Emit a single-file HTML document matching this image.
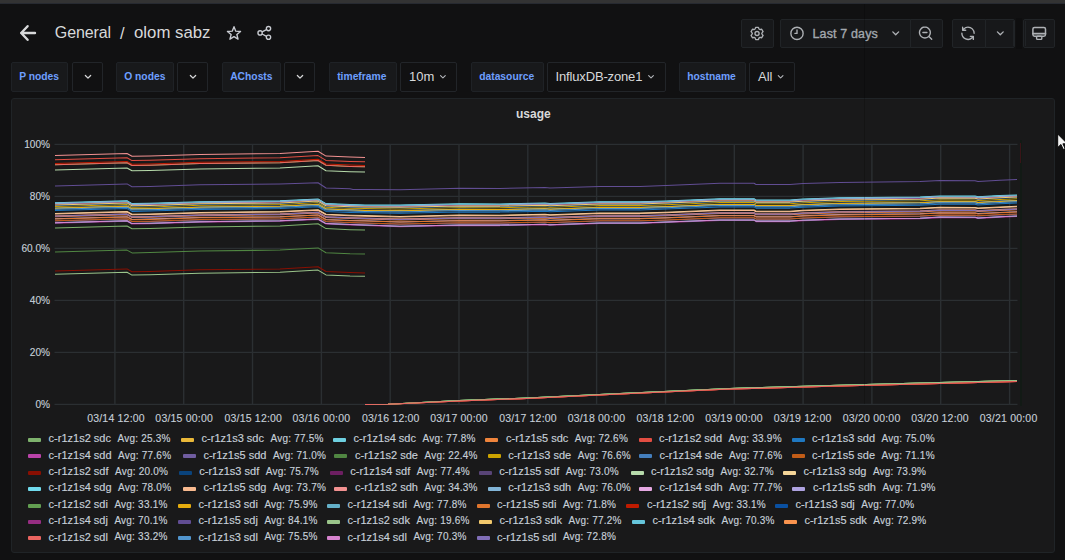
<!DOCTYPE html>
<html><head><meta charset="utf-8">
<style>
*{box-sizing:border-box;margin:0;padding:0}
html,body{width:1065px;height:560px;overflow:hidden;background:#111112;font-family:"Liberation Sans",sans-serif;color:#c7d0d9}
.abs{position:absolute}
#topbar{position:absolute;left:0;top:0;width:1065px;height:3px;background:#333333}
#topbar2{position:absolute;left:0;top:3px;width:1065px;height:1px;background:#272a31}
.title{position:absolute;top:23.3px;font-size:16.5px;color:#d8d9da;white-space:nowrap;line-height:20px}
.btn{position:absolute;top:19px;height:29px;background:#17181a;border:1px solid #212427;border-radius:2px}
.lbl{position:absolute;top:62px;height:30px;background:#18191b;border:1px solid #1f2226;border-radius:2px;color:#6e9fff;font-weight:bold;font-size:10.3px;line-height:27px;white-space:nowrap}
.dd{position:absolute;top:62px;height:30px;background:#111112;border:1px solid #222529;border-radius:2px;color:#d8d9da;font-size:13px;line-height:28px;white-space:nowrap}
#panel{position:absolute;left:11px;top:98px;width:1044px;height:455px;background:#19191a;border:1px solid #202427;border-radius:3px}
.yl{position:absolute;right:1015px;font-size:10.1px;-webkit-text-stroke:0.12px #c7d0d9;color:#c7d0d9;line-height:14px;white-space:nowrap;text-align:right}
.xl{position:absolute;top:410.9px;width:80px;text-align:center;font-size:10.5px;letter-spacing:0.2px;-webkit-text-stroke:0.12px #c7d0d9;color:#c7d0d9;line-height:14px;white-space:nowrap}
.li{position:absolute;height:16px;white-space:nowrap;font-size:11px;line-height:16px;color:#c7d0d9;-webkit-text-stroke:0.15px #c7d0d9}
.li i{display:inline-block;width:13px;height:4px;border-radius:1px;vertical-align:middle;margin-right:7.6px;position:relative;top:-1px}
.ln{display:inline-block;position:relative;top:-1.7px}
.la{display:inline-block;margin-left:6.5px;font-size:10px;letter-spacing:0.22px;position:relative;top:-1.8px}
svg{position:absolute;left:0;top:0}
</style></head><body>
<div id="topbar"></div><div id="topbar2"></div>

<!-- header -->
<svg width="1065" height="60" style="overflow:visible">
  <g fill="none" stroke="#d8d9da" stroke-width="2.4" stroke-linecap="round" stroke-linejoin="round">
    <path d="M21.2 33 L35 33 M21.2 33 L27.6 26.2 M21.2 33 L27.6 39.8"/>
  </g>
  <g fill="none" stroke="#c9ccd2" stroke-width="1.35" stroke-linejoin="round">
    <path d="M234.00 26.70 L235.76 31.17 L240.56 31.47 L236.85 34.53 L238.06 39.18 L234.00 36.60 L229.94 39.18 L231.15 34.53 L227.44 31.47 L232.24 31.17 Z"/>
  </g>
  <g fill="none" stroke="#c9ccd2" stroke-width="1.35">
    <circle cx="260.1" cy="32.9" r="2.15"/><circle cx="268.5" cy="28.6" r="2.15"/><circle cx="268.5" cy="37.3" r="2.15"/>
    <path d="M262.1 31.9 L266.5 29.6 M262.1 34 L266.5 36.3"/>
  </g>
</svg>
<div class="title" style="left:54.8px;font-size:16px;letter-spacing:-0.1px">General</div><div class="title" style="left:120px">/</div><div class="title" style="left:134px;font-size:16.8px">olom sabz</div>

<div class="btn" style="left:741px;width:33px"></div>
<div class="btn" style="left:780px;width:131px;border-radius:2px 0 0 2px"></div>
<div class="btn" style="left:910px;width:33px;border-radius:0 2px 2px 0"></div>
<div class="btn" style="left:952px;width:34px;border-radius:2px 0 0 2px"></div>
<div class="btn" style="left:985px;width:30px;border-radius:0 2px 2px 0"></div>
<div class="btn" style="left:1023px;width:32px"></div>
<div class="abs" style="left:1015.5px;top:18px;width:6px;height:31px;background:#0e0e0f"></div>
<div class="abs" style="left:1013px;top:21px;width:1px;height:25px;background:#202326"></div>
<div class="abs" style="left:1024.5px;top:21px;width:1px;height:25px;background:#202326"></div>
<div class="abs" style="left:812.5px;top:25.6px;font-size:12.5px;letter-spacing:0.14px;-webkit-text-stroke:0.35px #a3a8ae;color:#a3a8ae;line-height:16px;white-space:nowrap">Last 7 days</div>
<svg width="1065" height="60">
  <g fill="none" stroke="#aeb1b5" stroke-width="1.25" stroke-linecap="round" stroke-linejoin="round">
    <!-- gear -->
  </g><g fill="#aeb1b5" stroke="none">
    <path transform="translate(749.14 25.34) scale(0.680)" d="M19.9,12.66a1,1,0,0,1,0-1.32L21.18,9.9a1,1,0,0,0,.12-1.17l-2-3.46a1,1,0,0,0-1.07-.48l-1.88.38a1,1,0,0,1-1.15-.66l-.61-1.83A1,1,0,0,0,13.64,2h-4a1,1,0,0,0-1,.68L8.08,4.51a1,1,0,0,1-1.150.66L5,4.79A1,1,0,0,0,4,5.27L2,8.73A1,1,0,0,0,2.1,9.9l1.27,1.44a1,1,0,0,1,0,1.32L2.1,14.1A1,1,0,0,0,2,15.27l2,3.46a1,1,0,0,0,1.07.48l1.88-.38a1,1,0,0,1,1.15.66l.61,1.830a1,1,0,0,0,1,.68h4a1,1,0,0,0,.95-.68l.61-1.83a1,1,0,0,1,1.15-.66l1.88.38a1,1,0,0,0,1.07-.48l2-3.46a1,1,0,0,0-.12-1.17ZM18.41,14l.8.9-1.28,2.22-1.18-.24a3,3,0,0,0-3.45,2L12.92,20H10.36L10,18.86a3,3,0,0,0-3.45-2l-1.18.24L4.07,14.89l.8-.9a3,3,0,0,0,0-4l-.8-.9L5.35,6.89l1.18.24a3,3,0,0,0,3.45-2L10.36,4h2.560l.38,1.14a3,3,0,0,0,3.45,2l1.18-.24,1.28,2.22-.8.9A3,3,0,0,0,18.41,14ZM11.64,8a4,4,0,1,0,4,4A4,4,0,0,0,11.64,8Zm0,6a2,2,0,1,1,2-2A2,2,0,0,1,11.64,14Z"/>
    <path transform="translate(788.84 25.24) scale(0.680)" d="M12,2A10,10,0,1,0,22,12,10.01114,10.01114,0,0,0,12,2Zm0,18a8,8,0,1,1,8-8A8.00917,8.00917,0,0,1,12,20Zm0-14a1,1,0,0,0-1,1v4H9a1,1,0,0,0,0,2h3a1,1,0,0,0,1-1V7A1,1,0,0,0,12,6Z"/>
  </g><g fill="none" stroke="#aeb1b5" stroke-width="1.25" stroke-linecap="round" stroke-linejoin="round">
    <!-- chevron -->
    
    <!-- zoom out -->
  </g><g fill="#aeb1b5" stroke="none">
    <path transform="translate(917.44 25.04) scale(0.680)" d="M14,10H8a1,1,0,0,0,0,2h6a1,1,0,0,0,0-2Zm7.71,10.29L18,16.61A9,9,0,1,0,16.61,18l3.68,3.68a1,1,0,0,0,1.42,0A1,1,0,0,0,21.71,20.29ZM11,18a7,7,0,1,1,7-7A7,7,0,0,1,11,18Z"/>
    <path transform="translate(959.84 25.14) scale(0.680)" d="M19.91,15.51H15.38a1,1,0,0,0,0,2h2.4A8,8,0,0,1,4,12a1,1,0,0,0-2,0,10,10,0,0,0,16.88,7.23V21a1,1,0,0,0,2,0V16.5A1,1,0,0,0,19.910,15.51ZM12,2A10,10,0,0,0,5.12,4.77V3a1,1,0,0,0-2,0V7.5a1,1,0,0,0,1,1h4.5a1,1,0,0,0,0-2H6.22A8,8,0,0,1,20,12a1,1,0,0,0,2,0A10,10,0,0,0,12,2Z"/>
  </g><g fill="none" stroke="#aeb1b5" stroke-width="1.25" stroke-linecap="round" stroke-linejoin="round">
    <!-- chevron -->
    
  </g><g fill="#aeb1b5" stroke="none">
    <path transform="translate(887.54 25.14) scale(0.680)" d="M17,9.17a1,1,0,0,0-1.41,0L12,12.71,8.46,9.17a1,1,0,0,0-1.41,0,1,1,0,0,0,0,1.42l4.24,4.24a1,1,0,0,0,1.42,0L17,10.59A1,1,0,0,0,17,9.17Z"/>
    <path transform="translate(992.14 25.14) scale(0.680)" d="M17,9.17a1,1,0,0,0-1.41,0L12,12.71,8.46,9.17a1,1,0,0,0-1.41,0,1,1,0,0,0,0,1.42l4.24,4.24a1,1,0,0,0,1.42,0L17,10.59A1,1,0,0,0,17,9.17Z"/>
  </g><g fill="none" stroke="#aeb1b5" stroke-width="1.25" stroke-linecap="round" stroke-linejoin="round">
    <!-- tv -->
    <rect x="1032.9" y="27.4" width="12.6" height="8.8" rx="1.6" stroke-width="1.5"/>
    <path d="M1033 33.6 H1045.4" stroke-width="1.7"/>
    <rect x="1036.6" y="36.2" width="5.2" height="3.2" rx="0.8" stroke-width="1.4"/>
  </g>
</svg>

<!-- variables -->
<div class="lbl" style="left:11px;width:57px;padding-left:7.2px">P nodes</div>
<div class="dd" style="left:72px;width:31px"></div>
<div class="lbl" style="left:116px;width:58px;padding-left:7.2px">O nodes</div>
<div class="dd" style="left:177px;width:31px"></div>
<div class="lbl" style="left:222px;width:59px;padding-left:7.2px">AChosts</div>
<div class="dd" style="left:284px;width:31px"></div>
<div class="lbl" style="left:329px;width:68px;padding-left:7.2px">timeframe</div>
<div class="dd" style="left:400px;width:57px;padding-left:8px">10m</div>
<div class="lbl" style="left:471px;width:73px;padding-left:7.2px">datasource</div>
<div class="dd" style="left:547px;width:119px;padding-left:7.5px;letter-spacing:-0.15px">InfluxDB-zone1</div>
<div class="lbl" style="left:679px;width:67px;padding-left:7.2px">hostname</div>
<div class="dd" style="left:749px;width:46px;padding-left:8px">All</div>
<svg width="1065" height="100">
  <g fill="#d8d9da">
    <path transform="translate(80.56 69.36) scale(0.620)" d="M17,9.17a1,1,0,0,0-1.41,0L12,12.71,8.46,9.17a1,1,0,0,0-1.41,0,1,1,0,0,0,0,1.42l4.24,4.24a1,1,0,0,0,1.42,0L17,10.59A1,1,0,0,0,17,9.17Z"/>
    <path transform="translate(185.56 69.36) scale(0.620)" d="M17,9.17a1,1,0,0,0-1.41,0L12,12.71,8.46,9.17a1,1,0,0,0-1.41,0,1,1,0,0,0,0,1.42l4.24,4.24a1,1,0,0,0,1.42,0L17,10.59A1,1,0,0,0,17,9.17Z"/>
    <path transform="translate(292.56 69.36) scale(0.620)" d="M17,9.17a1,1,0,0,0-1.41,0L12,12.71,8.46,9.17a1,1,0,0,0-1.41,0,1,1,0,0,0,0,1.42l4.24,4.24a1,1,0,0,0,1.42,0L17,10.59A1,1,0,0,0,17,9.17Z"/>
  </g>
  <g fill="#b9bcc0">
    <path transform="translate(436.30 70.20) scale(0.550)" d="M17,9.17a1,1,0,0,0-1.41,0L12,12.71,8.46,9.17a1,1,0,0,0-1.41,0,1,1,0,0,0,0,1.42l4.24,4.24a1,1,0,0,0,1.42,0L17,10.59A1,1,0,0,0,17,9.17Z"/>
    <path transform="translate(644.40 70.20) scale(0.550)" d="M17,9.17a1,1,0,0,0-1.41,0L12,12.71,8.46,9.17a1,1,0,0,0-1.41,0,1,1,0,0,0,0,1.42l4.24,4.24a1,1,0,0,0,1.42,0L17,10.59A1,1,0,0,0,17,9.17Z"/>
    <path transform="translate(774.00 70.20) scale(0.550)" d="M17,9.17a1,1,0,0,0-1.41,0L12,12.71,8.46,9.17a1,1,0,0,0-1.41,0,1,1,0,0,0,0,1.42l4.24,4.24a1,1,0,0,0,1.42,0L17,10.59A1,1,0,0,0,17,9.17Z"/>
  </g>
</svg>

<!-- panel -->
<div id="panel"></div>
<div class="abs" style="left:0.8px;width:1065px;top:106px;text-align:center;font-size:12px;font-weight:bold;color:#d8d9da;line-height:16px">usage</div>
<div class="yl" style="top:137.5px">100%</div>
<div class="yl" style="top:189.5px">80%</div>
<div class="yl" style="top:241.5px">60.0%</div>
<div class="yl" style="top:293.5px">40%</div>
<div class="yl" style="top:345.5px">20%</div>
<div class="yl" style="top:397.5px">0%</div>
<div class="xl" style="left:76.0px">03/14 12:00</div>
<div class="xl" style="left:144.2px">03/15 00:00</div>
<div class="xl" style="left:213.3px">03/15 12:00</div>
<div class="xl" style="left:281.4px">03/16 00:00</div>
<div class="xl" style="left:350.8px">03/16 12:00</div>
<div class="xl" style="left:419.0px">03/17 00:00</div>
<div class="xl" style="left:488.0px">03/17 12:00</div>
<div class="xl" style="left:556.5px">03/18 00:00</div>
<div class="xl" style="left:625.4px">03/18 12:00</div>
<div class="xl" style="left:694.0px">03/19 00:00</div>
<div class="xl" style="left:762.7px">03/19 12:00</div>
<div class="xl" style="left:831.6px">03/20 00:00</div>
<div class="xl" style="left:900.0px">03/20 12:00</div>
<div class="xl" style="left:968.6px">03/21 00:00</div>
<svg width="1065" height="560">
  <g stroke="#2b2f32" stroke-width="1.4" fill="none">
<line x1="54.5" x2="1017.5" y1="404.4" y2="404.4"/>
<line x1="54.5" x2="1017.5" y1="352.4" y2="352.4"/>
<line x1="54.5" x2="1017.5" y1="300.4" y2="300.4"/>
<line x1="54.5" x2="1017.5" y1="248.4" y2="248.4"/>
<line x1="54.5" x2="1017.5" y1="196.4" y2="196.4"/>
<line x1="54.5" x2="1017.5" y1="144.4" y2="144.4"/>
<line x1="114.9" x2="114.9" y1="144.4" y2="404.4"/>
<line x1="183.7" x2="183.7" y1="144.4" y2="404.4"/>
<line x1="252.5" x2="252.5" y1="144.4" y2="404.4"/>
<line x1="321.4" x2="321.4" y1="144.4" y2="404.4"/>
<line x1="390.2" x2="390.2" y1="144.4" y2="404.4"/>
<line x1="459.0" x2="459.0" y1="144.4" y2="404.4"/>
<line x1="527.8" x2="527.8" y1="144.4" y2="404.4"/>
<line x1="596.6" x2="596.6" y1="144.4" y2="404.4"/>
<line x1="665.5" x2="665.5" y1="144.4" y2="404.4"/>
<line x1="734.3" x2="734.3" y1="144.4" y2="404.4"/>
<line x1="803.1" x2="803.1" y1="144.4" y2="404.4"/>
<line x1="871.9" x2="871.9" y1="144.4" y2="404.4"/>
<line x1="940.7" x2="940.7" y1="144.4" y2="404.4"/>
<line x1="1009.6" x2="1009.6" y1="144.4" y2="404.4"/>
  </g>
  <g fill="none" stroke-width="1.05" stroke-linejoin="round">
<path d="M55.0 228.0 L127.0 226.0 L132.0 228.8 L150.0 228.5 L200.0 226.9 L280.0 226.0 L318.0 223.8 L326.0 228.6 L350.0 229.7 L365.0 230.1" stroke="#7EB26D"/>
<path d="M365.0 404.4 L388.0 404.3 L459.0 400.6 L527.0 398.0 L620.0 393.4 L730.0 388.4 L830.0 385.4 L930.0 382.8 L1017.0 380.4" stroke="#7EB26D"/>
<path d="M55.0 204.1 L127.0 202.1 L132.0 204.9 L150.0 204.6 L200.0 203.0 L280.0 202.1 L318.0 200.3 L326.0 204.9 L350.0 205.9 L365.0 206.3 L400.0 206.4 L460.0 205.0 L500.0 205.2 L545.0 204.4 L550.0 204.8 L600.0 203.1 L640.0 203.1 L666.0 202.2 L720.0 200.0 L754.0 200.0 L756.0 201.2 L790.0 201.2 L803.0 200.4 L840.0 199.2 L920.0 198.3 L940.0 197.3 L975.0 197.4 L978.0 198.1 L1000.0 196.9 L1017.0 196.2" stroke="#EAB839"/>
<path d="M55.0 203.3 L127.0 201.3 L132.0 204.1 L150.0 203.8 L200.0 202.2 L280.0 201.3 L318.0 199.5 L326.0 204.1 L350.0 205.1 L365.0 205.5 L400.0 205.6 L460.0 204.2 L500.0 204.4 L545.0 203.5 L550.0 204.0 L600.0 202.3 L640.0 202.3 L666.0 201.4 L720.0 199.2 L754.0 199.2 L756.0 200.4 L790.0 200.4 L803.0 199.5 L840.0 198.3 L920.0 197.5 L940.0 196.5 L975.0 196.6 L978.0 197.3 L1000.0 196.1 L1017.0 195.4" stroke="#6ED0E0"/>
<path d="M55.0 216.8 L127.0 214.8 L132.0 217.6 L150.0 217.3 L200.0 215.7 L280.0 214.8 L318.0 213.0 L326.0 217.6 L350.0 218.6 L365.0 219.0 L400.0 219.9 L460.0 218.5 L500.0 218.7 L545.0 217.9 L550.0 218.4 L600.0 216.6 L640.0 216.6 L666.0 215.8 L720.0 213.5 L754.0 213.5 L756.0 214.7 L790.0 214.7 L803.0 213.9 L840.0 212.7 L920.0 211.9 L940.0 210.8 L975.0 210.9 L978.0 211.6 L1000.0 210.5 L1017.0 209.7" stroke="#EF843C"/>
<path d="M55.0 159.8 L127.0 157.8 L132.0 160.6 L150.0 160.3 L200.0 158.7 L280.0 157.8 L318.0 155.6 L326.0 160.4 L350.0 161.4 L365.0 161.8" stroke="#E24D42"/>
<path d="M365.0 404.4 L388.0 404.3 L459.0 401.0 L527.0 398.4 L620.0 394.1 L730.0 389.1 L830.0 386.3 L930.0 383.7 L1017.0 381.4" stroke="#E24D42"/>
<path d="M55.0 210.6 L127.0 208.6 L132.0 211.4 L150.0 211.1 L200.0 209.5 L280.0 208.6 L318.0 206.8 L326.0 211.4 L350.0 212.4 L365.0 212.8 L400.0 213.3 L460.0 211.9 L500.0 212.1 L545.0 211.2 L550.0 211.7 L600.0 210.0 L640.0 210.0 L666.0 209.1 L720.0 206.9 L754.0 206.9 L756.0 208.1 L790.0 208.1 L803.0 207.2 L840.0 206.0 L920.0 205.2 L940.0 204.2 L975.0 204.3 L978.0 205.0 L1000.0 203.8 L1017.0 203.1" stroke="#1F78C1"/>
<path d="M55.0 203.8 L127.0 201.8 L132.0 204.6 L150.0 204.3 L200.0 202.7 L280.0 201.8 L318.0 200.0 L326.0 204.6 L350.0 205.6 L365.0 206.0 L400.0 206.2 L460.0 204.8 L500.0 205.0 L545.0 204.1 L550.0 204.6 L600.0 202.9 L640.0 202.9 L666.0 202.0 L720.0 199.8 L754.0 199.8 L756.0 201.0 L790.0 201.0 L803.0 200.1 L840.0 198.9 L920.0 198.1 L940.0 197.0 L975.0 197.2 L978.0 197.9 L1000.0 196.7 L1017.0 196.0" stroke="#BA43A9"/>
<path d="M55.0 221.0 L127.0 219.0 L132.0 221.8 L150.0 221.5 L200.0 219.9 L280.0 219.0 L318.0 217.2 L326.0 221.8 L350.0 222.8 L365.0 223.2 L400.0 224.3 L460.0 222.9 L500.0 223.2 L545.0 222.3 L550.0 222.8 L600.0 221.0 L640.0 221.0 L666.0 220.2 L720.0 218.0 L754.0 218.0 L756.0 219.1 L790.0 219.1 L803.0 218.3 L840.0 217.1 L920.0 216.3 L940.0 215.2 L975.0 215.4 L978.0 216.1 L1000.0 214.9 L1017.0 214.2" stroke="#705DA0"/>
<path d="M55.0 252.1 L127.0 250.1 L132.0 252.9 L150.0 252.6 L200.0 251.0 L280.0 250.1 L318.0 247.9 L326.0 252.7 L350.0 253.8 L365.0 254.1" stroke="#508642"/>
<path d="M365.0 404.4 L388.0 404.3 L459.0 400.6 L527.0 398.0 L620.0 393.4 L730.0 388.4 L830.0 385.4 L930.0 382.8 L1017.0 380.4" stroke="#508642"/>
<path d="M55.0 206.4 L127.0 204.4 L132.0 207.2 L150.0 206.9 L200.0 205.3 L280.0 204.4 L318.0 202.6 L326.0 207.2 L350.0 208.2 L365.0 208.6 L400.0 208.9 L460.0 207.5 L500.0 207.7 L545.0 206.8 L550.0 207.3 L600.0 205.6 L640.0 205.6 L666.0 204.7 L720.0 202.5 L754.0 202.5 L756.0 203.7 L790.0 203.7 L803.0 202.8 L840.0 201.6 L920.0 200.8 L940.0 199.8 L975.0 199.9 L978.0 200.6 L1000.0 199.4 L1017.0 198.7" stroke="#CCA300"/>
<path d="M55.0 203.8 L127.0 201.8 L132.0 204.6 L150.0 204.3 L200.0 202.7 L280.0 201.8 L318.0 200.0 L326.0 204.6 L350.0 205.6 L365.0 206.0 L400.0 206.2 L460.0 204.8 L500.0 205.0 L545.0 204.1 L550.0 204.6 L600.0 202.9 L640.0 202.9 L666.0 202.0 L720.0 199.8 L754.0 199.8 L756.0 201.0 L790.0 201.0 L803.0 200.1 L840.0 198.9 L920.0 198.1 L940.0 197.0 L975.0 197.2 L978.0 197.9 L1000.0 196.7 L1017.0 196.0" stroke="#447EBC"/>
<path d="M55.0 220.7 L127.0 218.7 L132.0 221.5 L150.0 221.2 L200.0 219.6 L280.0 218.7 L318.0 216.9 L326.0 221.5 L350.0 222.5 L365.0 222.9 L400.0 224.1 L460.0 222.7 L500.0 222.9 L545.0 222.0 L550.0 222.5 L600.0 220.8 L640.0 220.8 L666.0 219.9 L720.0 217.7 L754.0 217.7 L756.0 218.9 L790.0 218.9 L803.0 218.0 L840.0 216.8 L920.0 216.0 L940.0 214.9 L975.0 215.1 L978.0 215.8 L1000.0 214.6 L1017.0 213.9" stroke="#C15C17"/>
<path d="M55.0 270.9 L127.0 268.9 L132.0 271.7 L150.0 271.4 L200.0 269.8 L280.0 268.9 L318.0 266.7 L326.0 271.5 L350.0 272.6 L365.0 273.0" stroke="#890F02"/>
<path d="M365.0 404.4 L388.0 404.3 L459.0 401.0 L527.0 398.4 L620.0 394.1 L730.0 389.1 L830.0 386.3 L930.0 383.7 L1017.0 381.4" stroke="#890F02"/>
<path d="M55.0 208.8 L127.0 206.8 L132.0 209.6 L150.0 209.3 L200.0 207.7 L280.0 206.8 L318.0 205.0 L326.0 209.6 L350.0 210.6 L365.0 211.0 L400.0 211.4 L460.0 210.0 L500.0 210.2 L545.0 209.3 L550.0 209.8 L600.0 208.1 L640.0 208.1 L666.0 207.2 L720.0 205.0 L754.0 205.0 L756.0 206.2 L790.0 206.2 L803.0 205.3 L840.0 204.1 L920.0 203.3 L940.0 202.2 L975.0 202.4 L978.0 203.1 L1000.0 201.9 L1017.0 201.2" stroke="#0A437C"/>
<path d="M55.0 204.4 L127.0 202.4 L132.0 205.2 L150.0 204.8 L200.0 203.3 L280.0 202.4 L318.0 200.6 L326.0 205.2 L350.0 206.1 L365.0 206.5 L400.0 206.7 L460.0 205.3 L500.0 205.5 L545.0 204.6 L550.0 205.1 L600.0 203.4 L640.0 203.4 L666.0 202.5 L720.0 200.3 L754.0 200.3 L756.0 201.5 L790.0 201.5 L803.0 200.6 L840.0 199.4 L920.0 198.6 L940.0 197.6 L975.0 197.7 L978.0 198.4 L1000.0 197.2 L1017.0 196.5" stroke="#6D1F62"/>
<path d="M55.0 215.8 L127.0 213.8 L132.0 216.6 L150.0 216.3 L200.0 214.7 L280.0 213.8 L318.0 212.0 L326.0 216.6 L350.0 217.6 L365.0 218.0 L400.0 218.8 L460.0 217.4 L500.0 217.6 L545.0 216.8 L550.0 217.3 L600.0 215.5 L640.0 215.5 L666.0 214.7 L720.0 212.4 L754.0 212.4 L756.0 213.6 L790.0 213.6 L803.0 212.8 L840.0 211.6 L920.0 210.8 L940.0 209.7 L975.0 209.8 L978.0 210.5 L1000.0 209.3 L1017.0 208.6" stroke="#584477"/>
<path d="M55.0 170.0 L127.0 168.0 L132.0 170.8 L150.0 170.5 L200.0 168.9 L280.0 168.0 L318.0 165.8 L326.0 170.7 L350.0 171.7 L365.0 172.1" stroke="#B7DBAB"/>
<path d="M365.0 404.4 L388.0 404.3 L459.0 400.6 L527.0 398.0 L620.0 393.4 L730.0 388.4 L830.0 385.4 L930.0 382.8 L1017.0 380.4" stroke="#B7DBAB"/>
<path d="M55.0 213.5 L127.0 211.5 L132.0 214.3 L150.0 213.9 L200.0 212.4 L280.0 211.5 L318.0 209.7 L326.0 214.3 L350.0 215.2 L365.0 215.6 L400.0 216.4 L460.0 215.0 L500.0 215.2 L545.0 214.3 L550.0 214.8 L600.0 213.1 L640.0 213.1 L666.0 212.2 L720.0 210.0 L754.0 210.0 L756.0 211.2 L790.0 211.2 L803.0 210.3 L840.0 209.1 L920.0 208.3 L940.0 207.2 L975.0 207.4 L978.0 208.1 L1000.0 206.9 L1017.0 206.2" stroke="#F4D598"/>
<path d="M55.0 202.8 L127.0 200.8 L132.0 203.6 L150.0 203.3 L200.0 201.7 L280.0 200.8 L318.0 199.0 L326.0 203.6 L350.0 204.6 L365.0 205.0 L400.0 205.1 L460.0 203.7 L500.0 203.9 L545.0 203.0 L550.0 203.5 L600.0 201.8 L640.0 201.8 L666.0 200.9 L720.0 198.7 L754.0 198.7 L756.0 199.9 L790.0 199.9 L803.0 199.0 L840.0 197.8 L920.0 197.0 L940.0 195.9 L975.0 196.1 L978.0 196.8 L1000.0 195.6 L1017.0 194.9" stroke="#70DBED"/>
<path d="M55.0 214.0 L127.0 212.0 L132.0 214.8 L150.0 214.5 L200.0 212.9 L280.0 212.0 L318.0 210.2 L326.0 214.8 L350.0 215.8 L365.0 216.2 L400.0 216.9 L460.0 215.5 L500.0 215.7 L545.0 214.8 L550.0 215.3 L600.0 213.6 L640.0 213.6 L666.0 212.7 L720.0 210.5 L754.0 210.5 L756.0 211.7 L790.0 211.7 L803.0 210.8 L840.0 209.6 L920.0 208.8 L940.0 207.8 L975.0 207.9 L978.0 208.6 L1000.0 207.4 L1017.0 206.7" stroke="#F9BA8F"/>
<path d="M55.0 155.5 L127.0 153.5 L132.0 156.3 L150.0 156.0 L200.0 154.4 L280.0 153.5 L318.0 151.3 L326.0 156.1 L350.0 157.1 L365.0 157.5" stroke="#F29191"/>
<path d="M365.0 404.4 L388.0 404.3 L459.0 401.0 L527.0 398.4 L620.0 394.1 L730.0 389.1 L830.0 386.3 L930.0 383.7 L1017.0 381.4" stroke="#F29191"/>
<path d="M55.0 208.0 L127.0 206.0 L132.0 208.8 L150.0 208.5 L200.0 206.9 L280.0 206.0 L318.0 204.2 L326.0 208.8 L350.0 209.8 L365.0 210.2 L400.0 210.6 L460.0 209.2 L500.0 209.4 L545.0 208.5 L550.0 209.0 L600.0 207.3 L640.0 207.3 L666.0 206.4 L720.0 204.2 L754.0 204.2 L756.0 205.4 L790.0 205.4 L803.0 204.5 L840.0 203.3 L920.0 202.5 L940.0 201.4 L975.0 201.6 L978.0 202.3 L1000.0 201.1 L1017.0 200.4" stroke="#82B5D8"/>
<path d="M55.0 203.6 L127.0 201.6 L132.0 204.4 L150.0 204.1 L200.0 202.5 L280.0 201.6 L318.0 199.8 L326.0 204.4 L350.0 205.4 L365.0 205.8 L400.0 205.9 L460.0 204.5 L500.0 204.7 L545.0 203.8 L550.0 204.3 L600.0 202.6 L640.0 202.6 L666.0 201.7 L720.0 199.5 L754.0 199.5 L756.0 200.7 L790.0 200.7 L803.0 199.8 L840.0 198.6 L920.0 197.8 L940.0 196.7 L975.0 196.9 L978.0 197.6 L1000.0 196.4 L1017.0 195.7" stroke="#E5A8E2"/>
<path d="M55.0 218.7 L127.0 216.7 L132.0 219.5 L150.0 219.1 L200.0 217.6 L280.0 216.7 L318.0 214.9 L326.0 219.5 L350.0 220.4 L365.0 220.8 L400.0 221.9 L460.0 220.5 L500.0 220.7 L545.0 219.8 L550.0 220.3 L600.0 218.6 L640.0 218.6 L666.0 217.7 L720.0 215.5 L754.0 215.5 L756.0 216.7 L790.0 216.7 L803.0 215.8 L840.0 214.6 L920.0 213.8 L940.0 212.7 L975.0 212.9 L978.0 213.6 L1000.0 212.4 L1017.0 211.7" stroke="#AEA2E0"/>
<path d="M55.0 164.7 L127.0 162.7 L132.0 165.5 L150.0 165.2 L200.0 163.6 L280.0 162.7 L318.0 160.5 L326.0 165.3 L350.0 166.4 L365.0 166.8" stroke="#629E51"/>
<path d="M365.0 404.4 L388.0 404.3 L459.0 400.6 L527.0 398.0 L620.0 393.4 L730.0 388.4 L830.0 385.4 L930.0 382.8 L1017.0 380.4" stroke="#629E51"/>
<path d="M55.0 208.3 L127.0 206.3 L132.0 209.1 L150.0 208.7 L200.0 207.2 L280.0 206.3 L318.0 204.5 L326.0 209.1 L350.0 210.0 L365.0 210.4 L400.0 210.8 L460.0 209.4 L500.0 209.6 L545.0 208.8 L550.0 209.3 L600.0 207.5 L640.0 207.5 L666.0 206.7 L720.0 204.4 L754.0 204.4 L756.0 205.6 L790.0 205.6 L803.0 204.8 L840.0 203.6 L920.0 202.8 L940.0 201.7 L975.0 201.8 L978.0 202.6 L1000.0 201.4 L1017.0 200.7" stroke="#E5AC0E"/>
<path d="M55.0 203.3 L127.0 201.3 L132.0 204.1 L150.0 203.8 L200.0 202.2 L280.0 201.3 L318.0 199.5 L326.0 204.1 L350.0 205.1 L365.0 205.5 L400.0 205.6 L460.0 204.2 L500.0 204.4 L545.0 203.5 L550.0 204.0 L600.0 202.3 L640.0 202.3 L666.0 201.4 L720.0 199.2 L754.0 199.2 L756.0 200.4 L790.0 200.4 L803.0 199.5 L840.0 198.3 L920.0 197.5 L940.0 196.5 L975.0 196.6 L978.0 197.3 L1000.0 196.1 L1017.0 195.4" stroke="#64B0C8"/>
<path d="M55.0 218.9 L127.0 216.9 L132.0 219.7 L150.0 219.4 L200.0 217.8 L280.0 216.9 L318.0 215.1 L326.0 219.7 L350.0 220.7 L365.0 221.1 L400.0 222.1 L460.0 220.7 L500.0 220.9 L545.0 220.1 L550.0 220.6 L600.0 218.8 L640.0 218.8 L666.0 218.0 L720.0 215.7 L754.0 215.7 L756.0 216.9 L790.0 216.9 L803.0 216.1 L840.0 214.9 L920.0 214.1 L940.0 213.0 L975.0 213.1 L978.0 213.9 L1000.0 212.7 L1017.0 212.0" stroke="#E0752D"/>
<path d="M55.0 163.4 L127.0 161.4 L132.0 164.2 L150.0 163.9 L200.0 162.3 L280.0 161.4 L318.0 159.2 L326.0 164.0 L350.0 165.1 L365.0 165.5" stroke="#BF1B00"/>
<path d="M365.0 404.4 L388.0 404.3 L459.0 401.0 L527.0 398.4 L620.0 394.1 L730.0 389.1 L830.0 386.3 L930.0 383.7 L1017.0 381.4" stroke="#BF1B00"/>
<path d="M55.0 205.4 L127.0 203.4 L132.0 206.2 L150.0 205.9 L200.0 204.3 L280.0 203.4 L318.0 201.6 L326.0 206.2 L350.0 207.2 L365.0 207.6 L400.0 207.8 L460.0 206.4 L500.0 206.6 L545.0 205.7 L550.0 206.2 L600.0 204.5 L640.0 204.5 L666.0 203.6 L720.0 201.4 L754.0 201.4 L756.0 202.6 L790.0 202.6 L803.0 201.7 L840.0 200.5 L920.0 199.7 L940.0 198.7 L975.0 198.8 L978.0 199.5 L1000.0 198.3 L1017.0 197.6" stroke="#0A50A1"/>
<path d="M55.0 223.3 L127.0 221.3 L132.0 224.1 L150.0 223.8 L200.0 222.2 L280.0 221.3 L318.0 219.5 L326.0 224.1 L350.0 225.1 L365.0 225.5 L400.0 226.8 L460.0 225.4 L500.0 225.6 L545.0 224.8 L550.0 225.2 L600.0 223.5 L640.0 223.5 L666.0 222.6 L720.0 220.4 L754.0 220.4 L756.0 221.6 L790.0 221.6 L803.0 220.7 L840.0 219.6 L920.0 218.7 L940.0 217.7 L975.0 217.8 L978.0 218.5 L1000.0 217.3 L1017.0 216.6" stroke="#962D82"/>
<path d="M55.0 185.9 L127.0 183.9 L132.0 186.7 L150.0 186.4 L200.0 184.8 L280.0 183.9 L318.0 182.7 L326.0 188.0 L350.0 188.8 L353.0 189.4 L365.0 189.5 L400.0 189.7 L460.0 188.3 L500.0 188.5 L545.0 187.6 L550.0 188.1 L600.0 186.4 L640.0 186.4 L666.0 185.5 L720.0 183.3 L754.0 183.3 L756.0 184.5 L790.0 184.5 L803.0 183.6 L840.0 182.4 L920.0 181.6 L940.0 180.5 L975.0 180.7 L978.0 181.4 L1000.0 180.2 L1017.0 179.5" stroke="#614D93"/>
<path d="M55.0 274.3 L127.0 272.3 L132.0 275.1 L150.0 274.8 L200.0 273.2 L280.0 272.3 L318.0 270.1 L326.0 274.9 L350.0 276.0 L365.0 276.3" stroke="#9AC48A"/>
<path d="M365.0 404.4 L388.0 404.3 L459.0 400.6 L527.0 398.0 L620.0 393.4 L730.0 388.4 L830.0 385.4 L930.0 382.8 L1017.0 380.4" stroke="#9AC48A"/>
<path d="M55.0 204.9 L127.0 202.9 L132.0 205.7 L150.0 205.4 L200.0 203.8 L280.0 202.9 L318.0 201.1 L326.0 205.7 L350.0 206.7 L365.0 207.1 L400.0 207.3 L460.0 205.9 L500.0 206.1 L545.0 205.2 L550.0 205.7 L600.0 204.0 L640.0 204.0 L666.0 203.1 L720.0 200.9 L754.0 200.9 L756.0 202.1 L790.0 202.1 L803.0 201.2 L840.0 200.0 L920.0 199.2 L940.0 198.1 L975.0 198.3 L978.0 199.0 L1000.0 197.8 L1017.0 197.1" stroke="#F2C96D"/>
<path d="M55.0 222.8 L127.0 220.8 L132.0 223.6 L150.0 223.3 L200.0 221.7 L280.0 220.8 L318.0 219.0 L326.0 223.6 L350.0 224.6 L365.0 225.0 L400.0 226.3 L460.0 224.9 L500.0 225.1 L545.0 224.2 L550.0 224.7 L600.0 223.0 L640.0 223.0 L666.0 222.1 L720.0 219.9 L754.0 219.9 L756.0 221.1 L790.0 221.1 L803.0 220.2 L840.0 219.0 L920.0 218.2 L940.0 217.1 L975.0 217.3 L978.0 218.0 L1000.0 216.8 L1017.0 216.1" stroke="#65C5DB"/>
<path d="M55.0 216.1 L127.0 214.1 L132.0 216.9 L150.0 216.5 L200.0 215.0 L280.0 214.1 L318.0 212.3 L326.0 216.9 L350.0 217.8 L365.0 218.2 L400.0 219.1 L460.0 217.7 L500.0 217.9 L545.0 217.0 L550.0 217.5 L600.0 215.8 L640.0 215.8 L666.0 214.9 L720.0 212.7 L754.0 212.7 L756.0 213.9 L790.0 213.9 L803.0 213.0 L840.0 211.8 L920.0 211.0 L940.0 210.0 L975.0 210.1 L978.0 210.8 L1000.0 209.6 L1017.0 208.9" stroke="#F9934E"/>
<path d="M55.0 164.7 L127.0 162.7 L132.0 165.5 L150.0 165.2 L200.0 163.6 L280.0 162.7 L318.0 160.5 L326.0 165.3 L350.0 166.4 L365.0 166.8" stroke="#EA6460"/>
<path d="M365.0 404.4 L388.0 404.3 L459.0 401.0 L527.0 398.4 L620.0 394.1 L730.0 389.1 L830.0 386.3 L930.0 383.7 L1017.0 381.4" stroke="#EA6460"/>
<path d="M55.0 209.3 L127.0 207.3 L132.0 210.1 L150.0 209.8 L200.0 208.2 L280.0 207.3 L318.0 205.5 L326.0 210.1 L350.0 211.1 L365.0 211.5 L400.0 211.9 L460.0 210.5 L500.0 210.8 L545.0 209.9 L550.0 210.4 L600.0 208.6 L640.0 208.6 L666.0 207.8 L720.0 205.6 L754.0 205.6 L756.0 206.7 L790.0 206.7 L803.0 205.9 L840.0 204.7 L920.0 203.9 L940.0 202.8 L975.0 203.0 L978.0 203.7 L1000.0 202.5 L1017.0 201.8" stroke="#5195CE"/>
<path d="M55.0 222.8 L127.0 220.8 L132.0 223.6 L150.0 223.3 L200.0 221.7 L280.0 220.8 L318.0 219.0 L326.0 223.6 L350.0 224.6 L365.0 225.0 L400.0 226.3 L460.0 224.9 L500.0 225.1 L545.0 224.2 L550.0 224.7 L600.0 223.0 L640.0 223.0 L666.0 222.1 L720.0 219.9 L754.0 219.9 L756.0 221.1 L790.0 221.1 L803.0 220.2 L840.0 219.0 L920.0 218.2 L940.0 217.1 L975.0 217.3 L978.0 218.0 L1000.0 216.8 L1017.0 216.1" stroke="#D683CE"/>
<path d="M55.0 216.3 L127.0 214.3 L132.0 217.1 L150.0 216.8 L200.0 215.2 L280.0 214.3 L318.0 212.5 L326.0 217.1 L350.0 218.1 L365.0 218.5 L400.0 219.4 L460.0 218.0 L500.0 218.2 L545.0 217.3 L550.0 217.8 L600.0 216.1 L640.0 216.1 L666.0 215.2 L720.0 213.0 L754.0 213.0 L756.0 214.2 L790.0 214.2 L803.0 213.3 L840.0 212.1 L920.0 211.3 L940.0 210.2 L975.0 210.4 L978.0 211.1 L1000.0 209.9 L1017.0 209.2" stroke="#806EB7"/>
  </g>
</svg>
<div class="li" style="left:28.0px;top:431.8px"><i style="background:#7EB26D"></i><span class="ln">c-r1z1s2 sdc</span><span class="la">Avg: 25.3%</span></div>
<div class="li" style="left:181.0px;top:431.8px"><i style="background:#EAB839"></i><span class="ln">c-r1z1s3 sdc</span><span class="la">Avg: 77.5%</span></div>
<div class="li" style="left:333.0px;top:431.8px"><i style="background:#6ED0E0"></i><span class="ln">c-r1z1s4 sdc</span><span class="la">Avg: 77.8%</span></div>
<div class="li" style="left:485.4px;top:431.8px"><i style="background:#EF843C"></i><span class="ln">c-r1z1s5 sdc</span><span class="la">Avg: 72.6%</span></div>
<div class="li" style="left:638.5px;top:431.8px"><i style="background:#E24D42"></i><span class="ln">c-r1z1s2 sdd</span><span class="la">Avg: 33.9%</span></div>
<div class="li" style="left:791.5px;top:431.8px"><i style="background:#1F78C1"></i><span class="ln">c-r1z1s3 sdd</span><span class="la">Avg: 75.0%</span></div>
<div class="li" style="left:28.0px;top:448.4px"><i style="background:#BA43A9"></i><span class="ln">c-r1z1s4 sdd</span><span class="la">Avg: 77.6%</span></div>
<div class="li" style="left:182.8px;top:448.4px"><i style="background:#705DA0"></i><span class="ln">c-r1z1s5 sdd</span><span class="la">Avg: 71.0%</span></div>
<div class="li" style="left:334.4px;top:448.4px"><i style="background:#508642"></i><span class="ln">c-r1z1s2 sde</span><span class="la">Avg: 22.4%</span></div>
<div class="li" style="left:487.6px;top:448.4px"><i style="background:#CCA300"></i><span class="ln">c-r1z1s3 sde</span><span class="la">Avg: 76.6%</span></div>
<div class="li" style="left:639.0px;top:448.4px"><i style="background:#447EBC"></i><span class="ln">c-r1z1s4 sde</span><span class="la">Avg: 77.6%</span></div>
<div class="li" style="left:791.5px;top:448.4px"><i style="background:#C15C17"></i><span class="ln">c-r1z1s5 sde</span><span class="la">Avg: 71.1%</span></div>
<div class="li" style="left:28.0px;top:465.0px"><i style="background:#890F02"></i><span class="ln">c-r1z1s2 sdf</span><span class="la">Avg: 20.0%</span></div>
<div class="li" style="left:178.7px;top:465.0px"><i style="background:#0A437C"></i><span class="ln">c-r1z1s3 sdf</span><span class="la">Avg: 75.7%</span></div>
<div class="li" style="left:329.7px;top:465.0px"><i style="background:#6D1F62"></i><span class="ln">c-r1z1s4 sdf</span><span class="la">Avg: 77.4%</span></div>
<div class="li" style="left:478.7px;top:465.0px"><i style="background:#584477"></i><span class="ln">c-r1z1s5 sdf</span><span class="la">Avg: 73.0%</span></div>
<div class="li" style="left:630.5px;top:465.0px"><i style="background:#B7DBAB"></i><span class="ln">c-r1z1s2 sdg</span><span class="la">Avg: 32.7%</span></div>
<div class="li" style="left:782.8px;top:465.0px"><i style="background:#F4D598"></i><span class="ln">c-r1z1s3 sdg</span><span class="la">Avg: 73.9%</span></div>
<div class="li" style="left:28.0px;top:481.1px"><i style="background:#70DBED"></i><span class="ln">c-r1z1s4 sdg</span><span class="la">Avg: 78.0%</span></div>
<div class="li" style="left:182.8px;top:481.1px"><i style="background:#F9BA8F"></i><span class="ln">c-r1z1s5 sdg</span><span class="la">Avg: 73.7%</span></div>
<div class="li" style="left:334.4px;top:481.1px"><i style="background:#F29191"></i><span class="ln">c-r1z1s2 sdh</span><span class="la">Avg: 34.3%</span></div>
<div class="li" style="left:487.6px;top:481.1px"><i style="background:#82B5D8"></i><span class="ln">c-r1z1s3 sdh</span><span class="la">Avg: 76.0%</span></div>
<div class="li" style="left:639.0px;top:481.1px"><i style="background:#E5A8E2"></i><span class="ln">c-r1z1s4 sdh</span><span class="la">Avg: 77.7%</span></div>
<div class="li" style="left:792.4px;top:481.1px"><i style="background:#AEA2E0"></i><span class="ln">c-r1z1s5 sdh</span><span class="la">Avg: 71.9%</span></div>
<div class="li" style="left:28.0px;top:497.5px"><i style="background:#629E51"></i><span class="ln">c-r1z1s2 sdi</span><span class="la">Avg: 33.1%</span></div>
<div class="li" style="left:178.0px;top:497.5px"><i style="background:#E5AC0E"></i><span class="ln">c-r1z1s3 sdi</span><span class="la">Avg: 75.9%</span></div>
<div class="li" style="left:327.0px;top:497.5px"><i style="background:#64B0C8"></i><span class="ln">c-r1z1s4 sdi</span><span class="la">Avg: 77.8%</span></div>
<div class="li" style="left:476.5px;top:497.5px"><i style="background:#E0752D"></i><span class="ln">c-r1z1s5 sdi</span><span class="la">Avg: 71.8%</span></div>
<div class="li" style="left:626.4px;top:497.5px"><i style="background:#BF1B00"></i><span class="ln">c-r1z1s2 sdj</span><span class="la">Avg: 33.1%</span></div>
<div class="li" style="left:774.9px;top:497.5px"><i style="background:#0A50A1"></i><span class="ln">c-r1z1s3 sdj</span><span class="la">Avg: 77.0%</span></div>
<div class="li" style="left:28.0px;top:513.6px"><i style="background:#962D82"></i><span class="ln">c-r1z1s4 sdj</span><span class="la">Avg: 70.1%</span></div>
<div class="li" style="left:178.0px;top:513.6px"><i style="background:#614D93"></i><span class="ln">c-r1z1s5 sdj</span><span class="la">Avg: 84.1%</span></div>
<div class="li" style="left:327.0px;top:513.6px"><i style="background:#9AC48A"></i><span class="ln">c-r1z1s2 sdk</span><span class="la">Avg: 19.6%</span></div>
<div class="li" style="left:479.0px;top:513.6px"><i style="background:#F2C96D"></i><span class="ln">c-r1z1s3 sdk</span><span class="la">Avg: 77.2%</span></div>
<div class="li" style="left:632.0px;top:513.6px"><i style="background:#65C5DB"></i><span class="ln">c-r1z1s4 sdk</span><span class="la">Avg: 70.3%</span></div>
<div class="li" style="left:783.8px;top:513.6px"><i style="background:#F9934E"></i><span class="ln">c-r1z1s5 sdk</span><span class="la">Avg: 72.9%</span></div>
<div class="li" style="left:28.0px;top:530.2px"><i style="background:#EA6460"></i><span class="ln">c-r1z1s2 sdl</span><span class="la">Avg: 33.2%</span></div>
<div class="li" style="left:178.0px;top:530.2px"><i style="background:#5195CE"></i><span class="ln">c-r1z1s3 sdl</span><span class="la">Avg: 75.5%</span></div>
<div class="li" style="left:327.0px;top:530.2px"><i style="background:#D683CE"></i><span class="ln">c-r1z1s4 sdl</span><span class="la">Avg: 70.3%</span></div>
<div class="li" style="left:476.5px;top:530.2px"><i style="background:#806EB7"></i><span class="ln">c-r1z1s5 sdl</span><span class="la">Avg: 72.8%</span></div>
<!-- cursor -->
<div class="abs" style="left:864px;top:4px;width:1px;height:400px;background:rgba(0,0,0,0.2)"></div>
<div class="abs" style="left:1019.5px;top:140px;width:2px;height:266px;background:#121a15"></div>
<div class="abs" style="left:1019.5px;top:143px;width:1.5px;height:20px;background:#3a1418"></div>
<svg width="1065" height="560" style="pointer-events:none">
  <path d="M1057.70 134.00 L1057.70 147.50 L1060.94 144.44 L1063.28 149.48 L1065.17 148.67 L1062.92 143.81 L1067.42 143.81 Z" fill="#f4f4f4" stroke="#000" stroke-width="0.9" stroke-linejoin="miter"/>
</svg>
</body></html>
